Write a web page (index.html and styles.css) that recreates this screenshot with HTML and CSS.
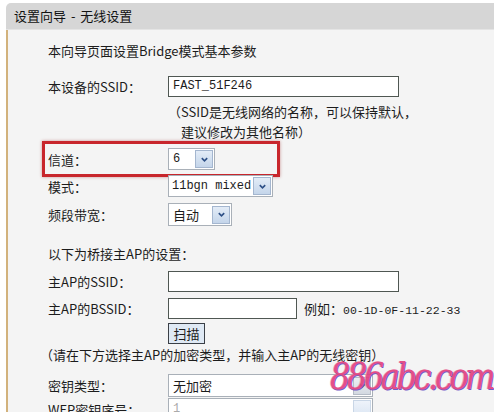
FILE: index.html
```html
<!DOCTYPE html>
<html lang="zh-CN">
<head>
<meta charset="utf-8">
<title>设置向导 - 无线设置</title>
<link rel="stylesheet" href="styles.css">
</head>
<body>
<div class="window">
  <div class="titlebar">设置向导 - 无线设置</div>
  <div class="content">
    <div class="row intro">本向导页面设置Bridge模式基本参数</div>

    <div class="row r-ssid">
      <div class="label">本设备的SSID：</div>
      <div class="input wide mono">FAST_51F246</div>
    </div>
    <div class="note n1">（SSID是无线网络的名称，可以保持默认，</div>
    <div class="note n2">建议修改为其他名称）</div>

    <div class="highlight">
      <div class="row r-chan">
        <div class="label">信道：</div>
        <div class="select s-chan"><span class="val mono">6</span><span class="arrow"><svg viewBox="0 0 10 10" width="9" height="9"><path d="M2 3.5 L5 6.5 L8 3.5" fill="none" stroke="#2d4f86" stroke-width="1.8"/></svg></span></div>
      </div>
    </div>

    <div class="row r-mode">
      <div class="label">模式：</div>
      <div class="select s-mode"><span class="val mono">11bgn mixed</span><span class="arrow"><svg viewBox="0 0 10 10" width="9" height="9"><path d="M2 3.5 L5 6.5 L8 3.5" fill="none" stroke="#2d4f86" stroke-width="1.8"/></svg></span></div>
    </div>

    <div class="row r-band">
      <div class="label">频段带宽：</div>
      <div class="select s-band"><span class="val">自动</span><span class="arrow"><svg viewBox="0 0 10 10" width="9" height="9"><path d="M2 3.5 L5 6.5 L8 3.5" fill="none" stroke="#2d4f86" stroke-width="1.8"/></svg></span></div>
    </div>

    <div class="row r-bridge">以下为桥接主AP的设置：</div>

    <div class="row r-apssid">
      <div class="label">主AP的SSID：</div>
      <div class="input wide"></div>
    </div>

    <div class="row r-bssid">
      <div class="label">主AP的BSSID：</div>
      <div class="input short"></div>
      <span class="example">例如：<span class="mono">00-1D-0F-11-22-33</span></span>
    </div>

    <div class="row r-scan">
      <div class="label"></div>
      <div class="button">扫描</div>
    </div>

    <div class="row r-encnote">（请在下方选择主AP的加密类型，并输入主AP的无线密钥）</div>

    <div class="row r-key">
      <div class="label">密钥类型：</div>
      <div class="select s-key"><span class="val">无加密</span><span class="arrow grey"><svg viewBox="0 0 10 10" width="9" height="9"><path d="M2 3.5 L5 6.5 L8 3.5" fill="none" stroke="#6a7890" stroke-width="1.8"/></svg></span></div>
    </div>

    <div class="row r-wep">
      <div class="label">WEP密钥序号：</div>
      <div class="select s-wep disabled"><span class="val mono">1</span><span class="arrow light"></span></div>
    </div>

    <div class="watermark">886abc.com</div>
  </div>
</div>
</body>
</html>
```
FILE: styles.css
```css
html, body {
  margin: 0;
  padding: 0;
  background: #ffffff;
  overflow: hidden;
}
body {
  width: 494px;
  height: 412px;
  font-family: "Noto Sans CJK SC", "DejaVu Sans", sans-serif;
  font-size: 13px;
  color: #1c1c1c;
}
.window {
  margin: 3px 0 0 6px;
  height: 409px;
  display: flex;
  flex-direction: column;
}
.titlebar {
  height: 26px;
  line-height: 25px;
  background: #d6d6d6;
  border-bottom: 1px solid #e4e4e4;
  border-radius: 5px 0 0 0;
  padding-left: 8px;
  font-size: 13px;
  color: #111;
  word-spacing: 2px;
}
.content {
  position: relative;
  flex: 1;
  background: #f4f4f4;
  border-left: 2px solid #d2b27c;
  padding-left: 40px;
  overflow: hidden;
}
.row {
  display: flex;
  align-items: center;
  flex: none;
}
.label {
  width: 120px;
  flex: none;
}
.mono {
  font-family: "Liberation Mono", monospace;
  font-size: 12px;
}
.intro {
  margin-top: 10px;
  height: 20px;
}
.r-ssid { margin-top: 15px; height: 22px; }
.input {
  box-sizing: border-box;
  height: 21px;
  background: #fff;
  border: 1px solid #4f5752;
  display: flex;
  align-items: center;
  padding-left: 4px;
}
.input.wide { width: 231px; }
.input.short { width: 129px; }
.note {
  height: 20px;
  line-height: 20px;
  margin-left: 120px;
}
.n1 { margin-top: 5px; }
.n2 { padding-left: 13px; }

.highlight {
  margin: -1px 0 0 -6px;
  width: 229px;
  height: 30px;
  border: 3px solid #c8262c;
  box-shadow: 0 0 3px rgba(150, 30, 30, 0.45);
  padding-left: 3px;
  display: flex;
  align-items: center;
}
.r-chan { height: 22px; }

.select {
  box-sizing: border-box;
  height: 22px;
  background: #fff;
  border: 1px solid #a9b0b8;
  display: flex;
  align-items: center;
  justify-content: space-between;
  padding: 0 1px 0 4px;
}
.arrow {
  box-sizing: border-box;
  width: 18px;
  height: 18px;
  border: 1px solid #a4b6cf;
  background: linear-gradient(#e3ecf7, #c4d5ea);
  display: flex;
  align-items: center;
  justify-content: center;
}
.arrow.grey {
  border-color: #b5bcc6;
  background: linear-gradient(#eceff3, #d3d9e1);
}
.arrow.light {
  border-color: #c9d6e6;
  background: linear-gradient(#eef3fa, #dae5f3);
}
.s-chan { width: 47px; }
.s-mode { width: 105px; padding-left: 3px; }
.s-band { width: 64px; height: 23px; }
.s-key { width: 205px; height: 23px; }
.s-wep { width: 205px; }
.disabled .val { color: #aaa; }

.r-mode { margin-top: -2px; height: 22px; }
.r-band { margin-top: 6px; height: 23px; }
.r-bridge { margin-top: 17px; height: 20px; }
.r-apssid { margin-top: 7px; height: 22px; }
.r-bssid { margin-top: 6px; height: 21px; }
.example { margin-left: 7px; }
.example .mono { font-size: 11.5px; }
.r-scan { margin-top: 3px; height: 22px; }
.button {
  box-sizing: border-box;
  width: 37px;
  height: 21px;
  border: 1px solid #3a3f46;
  background: #dfe9f4;
  display: flex;
  align-items: center;
  justify-content: center;
  font-size: 13px;
}
.r-encnote { margin: 0 0 0 -8px; height: 20px; }
.r-key { margin-top: 10px; height: 23px; }
.r-wep { margin-top: 1px; height: 22px; }

.watermark {
  position: absolute;
  left: 322px;
  top: 324px;
  font-family: "DejaVu Serif", "Liberation Serif", serif;
  font-style: italic;
  font-size: 38px;
  letter-spacing: -4px;
  color: #e2427f;
  text-shadow: 1px 1px 0 #6a4fc4, -1px 0 0 #f39ab8;
  opacity: 0.92;
  transform: scaleX(0.84);
  transform-origin: left center;
  white-space: nowrap;
}
```
